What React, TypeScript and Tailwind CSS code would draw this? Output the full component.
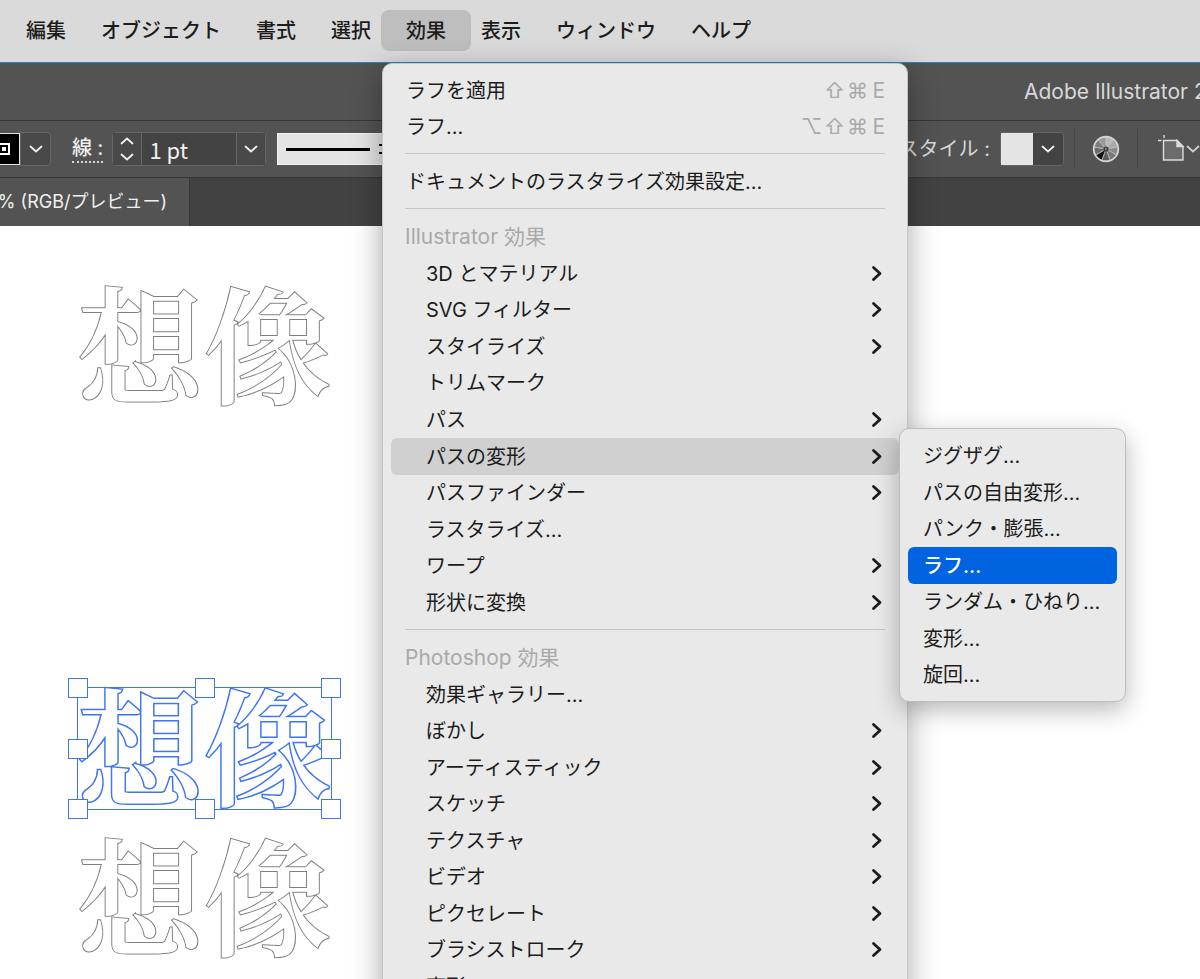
import React from 'react';
import clsx from 'clsx';

type Item = { label: string; shortcut?: string[]; sub?: boolean; open?: boolean };

const MENUS = ['編集', 'オブジェクト', '書式', '選択', '効果', '表示', 'ウィンドウ', 'ヘルプ'];

const ILLUSTRATOR_EFFECTS: Item[] = [
  { label: '3D とマテリアル', sub: true },
  { label: 'SVG フィルター', sub: true },
  { label: 'スタイライズ', sub: true },
  { label: 'トリムマーク' },
  { label: 'パス', sub: true },
  { label: 'パスの変形', sub: true, open: true },
  { label: 'パスファインダー', sub: true },
  { label: 'ラスタライズ...' },
  { label: 'ワープ', sub: true },
  { label: '形状に変換', sub: true },
];

const PHOTOSHOP_EFFECTS: Item[] = [
  { label: '効果ギャラリー...' },
  { label: 'ぼかし', sub: true },
  { label: 'アーティスティック', sub: true },
  { label: 'スケッチ', sub: true },
  { label: 'テクスチャ', sub: true },
  { label: 'ビデオ', sub: true },
  { label: 'ピクセレート', sub: true },
  { label: 'ブラシストローク', sub: true },
  { label: '変形', sub: true },
];

const DISTORT_ITEMS = [
  'ジグザグ...',
  'パスの自由変形...',
  'パンク・膨張...',
  'ラフ...',
  'ランダム・ひねり...',
  '変形...',
  '旋回...',
];

const HANDLES = [
  'left-0 top-0',
  'left-1/2 top-0',
  'left-full top-0',
  'left-0 top-1/2',
  'left-full top-1/2',
  'left-0 top-full',
  'left-1/2 top-full',
  'left-full top-full',
];

const WHEEL = ['#b8b8b8', '#a8a8a8', '#8a8a8a', '#777777', '#5a5a5a', '#151515', '#6a6a6a', '#7c7c7c', '#9a9a9a'];

const Caret: React.FC<{ up?: boolean }> = ({ up }) => (
  <svg width="14" height="8" viewBox="0 0 14 8" fill="none" stroke="currentColor" strokeWidth="1.8" strokeLinecap="round">
    <path d={up ? 'M1.5 6.5 7 1.5l5.5 5' : 'M1.5 1.5 7 6.5l5.5-5'} />
  </svg>
);

const ColorWheelIcon = () => {
  const step = (Math.PI * 2) / WHEEL.length;
  const point = (i: number, r: number) =>
    `${14 + r * Math.sin(i * step)} ${14 - r * Math.cos(i * step)}`;
  return (
    <svg width="28" height="28" viewBox="0 0 28 28">
      {WHEEL.map((color, i) => (
        <path
          key={i}
          d={`M14 14L${point(i, 12)}A12 12 0 0 1 ${point(i + 1, 12)}Z`}
          fill={color}
          stroke="#c4c4c4"
          strokeWidth="0.8"
        />
      ))}
      <circle cx="14" cy="14" r="12.4" fill="none" stroke="#d6d6d6" strokeWidth="1.6" />
      <circle cx="14" cy="14" r="2" fill="#777" stroke="#333" strokeWidth="1.2" />
    </svg>
  );
};

const ArtboardIcon = () => (
  <svg width="28" height="28" viewBox="0 0 28 28" fill="none" stroke="#dcdcdc" strokeWidth="1.4">
    <path d="M0 5.5h3.5M6 0v3" />
    <path d="M5.5 5.5H19L25 11.5V25H5.5Z" fill="#6c6c6c" />
    <path d="M19 5.5v6h6z" fill="#dcdcdc" />
  </svg>
);

const MenuRow: React.FC<{ item: Item; indent?: boolean }> = ({ item, indent }) => (
  <li className="relative">
    <button
      className={clsx(
        'flex h-full w-full items-center justify-between rounded-md pr-[14px] text-left whitespace-nowrap',
        indent ? 'pl-[35px]' : 'pl-[15px]',
        item.open && 'bg-[#d0d0d0]',
      )}
    >
      <span>{item.label}</span>
      {item.shortcut && (
        <span className="flex text-[#a9a9a9]">
          {item.shortcut.map((key) => (
            <kbd key={key} className="w-[23px] text-center font-['Inter','DejaVu_Sans',sans-serif] text-[21px] last:w-4 last:text-right">
              {key}
            </kbd>
          ))}
        </span>
      )}
      {item.sub && (
        <svg width="16" height="18" viewBox="0 0 16 18" fill="none" stroke="#1c1c1c" strokeWidth="2.8" strokeLinecap="round" strokeLinejoin="round">
          <path d="M4.5 2.5 11 8.5l-6.5 6" />
        </svg>
      )}
    </button>
    {item.open && <DistortMenu />}
  </li>
);

const DistortMenu = () => (
  <ul className="absolute -top-[10px] left-full z-20 grid h-[274px] w-[227px] auto-rows-fr rounded-[10px] border border-[#bdbdbd] bg-[#e9e9e9] p-2 shadow-[0_8px_24px_rgba(0,0,0,0.28)]">
    {DISTORT_ITEMS.map((label, i) => (
      <li key={label}>
        <button
          className={clsx(
            'flex h-full w-full items-center rounded-md pt-px pl-[15px] text-left whitespace-nowrap',
            i === 3 && 'bg-[#0064e1] font-medium text-white',
          )}
        >
          {label}
        </button>
      </li>
    ))}
  </ul>
);

const Separator = () => <hr className="mx-[14px] mt-2 mb-[10px] h-px border-0 bg-[#c6c6c6]" />;

const EffectMenu = () => (
  <div className="absolute top-[53px] left-px z-10 w-[526px] rounded-[10px] border border-[#c6c6c6] bg-[#e9e9e9] px-2 pt-[9px] pb-2 font-normal shadow-[0_8px_30px_rgba(0,0,0,0.35)]">
    <ul className="grid h-[72px] auto-rows-fr">
      <MenuRow item={{ label: 'ラフを適用', shortcut: ['⇧', '⌘', 'E'] }} />
      <MenuRow item={{ label: 'ラフ...', shortcut: ['⌥', '⇧', '⌘', 'E'] }} />
    </ul>
    <Separator />
    <ul className="grid h-9">
      <MenuRow item={{ label: 'ドキュメントのラスタライズ効果設定...' }} />
    </ul>
    <Separator />
    <ul className="grid h-[402px] auto-rows-fr">
      <li className="flex items-center pl-[14px] text-[21px] text-[#a9a9a9]">Illustrator 効果</li>
      {ILLUSTRATOR_EFFECTS.map((item) => (
        <MenuRow key={item.label} item={item} indent />
      ))}
    </ul>
    <Separator />
    <ul className="grid h-[365px] auto-rows-fr">
      <li className="flex items-center pl-[14px] text-[21px] text-[#a9a9a9]">Photoshop 効果</li>
      {PHOTOSHOP_EFFECTS.map((item) => (
        <MenuRow key={item.label} item={item} indent />
      ))}
    </ul>
  </div>
);

const MenuBar = () => (
  <nav className="relative z-10 h-[63px] border-b border-[#1f86c9] bg-[#dadada]">
    <ul className="flex gap-[35px] pt-[10px] pl-[26px] font-medium">
      {MENUS.map((name) =>
        name === '効果' ? (
          <li key={name} className="relative -mx-[25px]">
            <button className="h-[41px] rounded-lg bg-[#bebebe] px-[25px]">{name}</button>
            <EffectMenu />
          </li>
        ) : (
          <li key={name}>
            <button className="h-[41px] whitespace-nowrap">{name}</button>
          </li>
        ),
      )}
    </ul>
  </nav>
);

const ControlBar = () => (
  <div className="flex h-[57px] items-center border-b border-[#363636] text-[#f0f0f0]">
    <button aria-label="線のカラー" className="flex h-8 w-5 items-center justify-start overflow-hidden border-y border-r border-[#e4e4e4] bg-black">
      <span className="-ml-[2px] flex h-3 w-3 items-center justify-center border-2 border-white">
        <span className="h-1 w-1 bg-white" />
      </span>
    </button>
    <button aria-label="カラーを選択" className="flex h-[34px] w-[31px] items-center justify-center rounded-r-sm border border-[#666] bg-[#494949]">
      <Caret />
    </button>
    <label htmlFor="stroke" className="ml-[21px] border-b-2 border-dotted border-[#d8d8d8] leading-[26px] font-medium">
      線 :
    </label>
    <div className="ml-[9px] flex h-[34px] rounded-sm border border-[#666] bg-[#434343]">
      <div className="flex w-[29px] flex-col items-center justify-between border-r border-[#666] bg-[#494949] py-1">
        <button aria-label="線幅を上げる" className="flex"><Caret up /></button>
        <button aria-label="線幅を下げる" className="flex"><Caret /></button>
      </div>
      <input id="stroke" defaultValue="1 pt" className="w-[94px] bg-transparent pl-[7px] font-['Noto_Sans_CJK_JP',sans-serif] text-[22px] outline-none" />
      <button aria-label="線幅を選択" className="flex w-[29px] items-center justify-center border-l border-[#666] bg-[#494949]">
        <Caret />
      </button>
    </div>
    <button aria-label="可変線幅プロファイル" className="ml-[11px] flex h-8 w-[130px] items-center gap-[9px] border border-[#f4f4f4] bg-[#e4e4e4] pl-2">
      <span className="h-[3px] w-[84px] bg-black" />
      <span className="h-[10px] w-2 border-y-2 border-black" />
    </button>

    <label htmlFor="style" className="ml-auto whitespace-nowrap text-[#d8d8d8]">
      スタイル :
    </label>
    <div className="ml-[10px] flex h-[34px] rounded-sm border border-[#666] bg-[#434343]">
      <span className="w-8 bg-[#e4e4e4]" />
      <button id="style" className="flex w-[30px] items-center justify-center">
        <Caret />
      </button>
    </div>
    <span className="mx-[10px] h-10 w-px bg-[#464646]" />
    <button aria-label="オブジェクトを再配色" className="ml-[7px]"><ColorWheelIcon /></button>
    <span className="mr-[20px] ml-[17px] h-10 w-px bg-[#464646]" />
    <button aria-label="アートボード" className="flex items-center text-[#cfcfcf]">
      <ArtboardIcon />
      <Caret />
    </button>
  </div>
);

const Lettering: React.FC<{ className: string }> = ({ className }) => (
  <p
    className={clsx(
      "absolute left-[77px] font-['Noto_Serif_CJK_JP','Noto_Sans_CJK_JP',serif] text-[127px] leading-[127px] font-semibold whitespace-nowrap text-white [paint-order:stroke_fill]",
      className,
    )}
  >
    想像
  </p>
);

const Artboard = () => (
  <main className="relative flex-1 bg-white">
    <Lettering className="top-[51px] [-webkit-text-stroke:2px_#808080]" />
    <Lettering className="top-[453px] [-webkit-text-stroke:3px_#3f74f2]" />
    <Lettering className="top-[603px] [-webkit-text-stroke:2px_#808080]" />
    <div className="absolute top-[461px] left-[77px] h-[123px] w-[255px] border border-[#3f74f2]">
      {HANDLES.map((place) => (
        <span key={place} className={clsx('absolute h-5 w-5 -translate-1/2 border border-[#3f74f2] bg-white', place)} />
      ))}
    </div>
  </main>
);

const App: React.FC = () => {
  return (
    <div className="flex h-screen flex-col overflow-hidden bg-[#535353] font-['Inter','Noto_Sans_CJK_JP',sans-serif] text-[20px] leading-[30px] text-[#1c1c1c]">
      <MenuBar />

      <header className="flex h-[58px] items-center justify-end border-b border-[#363636] text-[#d8d8d8]">
        <h1 className="w-[176px] overflow-hidden text-[21px] whitespace-nowrap">Adobe Illustrator 2</h1>
      </header>

      <ControlBar />

      <div className="flex h-12 bg-[#424242]">
        <button className="flex w-[190px] items-center justify-end overflow-hidden border-r border-[#363636] bg-[#535353] pr-[22px] text-[18px] whitespace-nowrap text-[#f0f0f0]">
          % (RGB/プレビュー)
        </button>
      </div>

      <Artboard />
    </div>
  );
};

export default App;
